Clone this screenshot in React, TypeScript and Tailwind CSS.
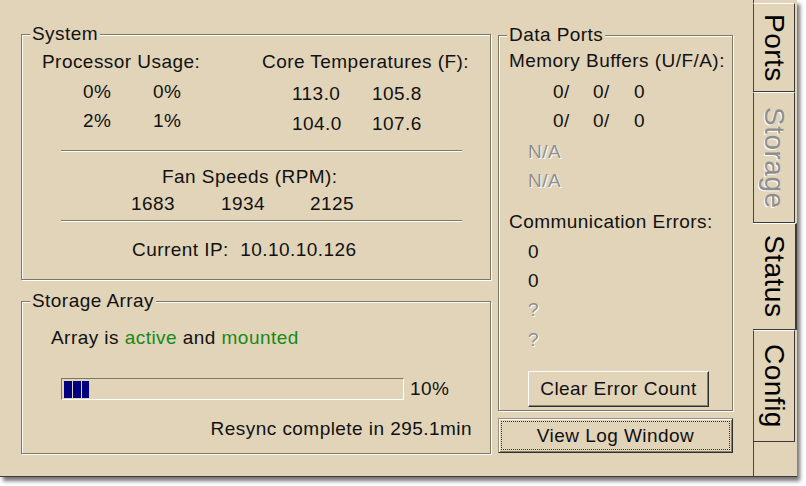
import type { ReactNode } from "react";

function Group({ title, className, children }: { title: string; className: string; children: ReactNode }) {
  return (
    <div className={`relative border border-[#7f7766] shadow-[inset_1px_1px_0_#ffffff,1px_1px_0_#ffffff] ${className}`}>
      <span className="absolute left-[8px] top-[-13px] bg-[#e1d4b9] px-[2px] leading-[24px]">{title}</span>
      {children}
    </div>
  );
}

function Separator({ className }: { className: string }) {
  return <div className={`h-[2px] border-t border-[#7f7766] border-b border-b-white ${className}`} />;
}

function Tab({ label, selected, muted, className }: { label: string; selected?: boolean; muted?: boolean; className: string }) {
  const frame = selected
    ? "w-[44px] border-t border-t-white border-r-2 border-r-[#3a3a3a] border-b border-b-[#3a3a3a]"
    : "w-[42px] border-l border-l-[#4a463e] border-t border-t-white border-r border-r-[#3a3a3a] border-b border-b-[#3a3a3a]";
  return (
    <div className={`flex items-center justify-center ${frame} ${className}`}>
      <span
        className={`[writing-mode:vertical-rl] text-[28px] leading-[30px] tracking-[0.5px] ${
          muted ? "text-[#8e8e8e] [text-shadow:1px_1px_0_#ffffff]" : "text-black"
        }`}
      >
        {label}
      </span>
    </div>
  );
}

export default function App() {
  return (
    <div className="h-[486px] w-[806px] bg-white font-['Liberation_Sans',Arial,sans-serif] text-[19px] leading-[24px] tracking-[0.45px] text-[#111]">
      <div className="flex h-[477px] w-[797px] border-b border-[#3a3a3a] bg-[#e1d4b9] shadow-[3px_4px_4px_rgba(0,0,0,0.55)]">
        {/* page */}
        <div className="flex w-[753px] gap-[7px] pl-[21px] pt-[34px]">
          <div className="flex w-[470px] flex-col gap-[21px]">
            <Group title="System" className="h-[246px]">
              <div className="mt-[15px] flex pl-[20px]">
                <span className="w-[220px]">Processor Usage:</span>
                <span>Core Temperatures (F):</span>
              </div>
              <div className="flex h-[68px] items-start">
                <div className="ml-[61px] mt-[6px] w-[209px]">
                  <div className="flex h-[29px]"><span className="w-[70px]">0%</span><span>0%</span></div>
                  <div className="flex h-[29px]"><span className="w-[70px]">2%</span><span>1%</span></div>
                </div>
                <div className="mt-[8px]">
                  <div className="flex h-[30px]"><span className="w-[80px]">113.0</span><span>105.8</span></div>
                  <div className="flex h-[30px]"><span className="w-[80px]">104.0</span><span>107.6</span></div>
                </div>
              </div>
              <Separator className="ml-[39px] mr-[28px] mt-[8px]" />
              <div className="mt-[13px] pl-[140px]">Fan Speeds (RPM):</div>
              <div className="mt-[3px] flex pl-[109px]">
                <span className="w-[90px]">1683</span>
                <span className="w-[89px]">1934</span>
                <span>2125</span>
              </div>
              <Separator className="ml-[39px] mr-[28px] mt-[4px]" />
              <div className="mt-[16px] pl-[110px]">Current IP:&nbsp; 10.10.10.126</div>
            </Group>

            <Group title="Storage Array" className="h-[153px]">
              <div className="mt-[24px] pl-[29px]">
                Array is <span className="text-[#168a16]">active</span> and <span className="text-[#168a16]">mounted</span>
              </div>
              <div className="mt-[27px] flex items-center pl-[39px]">
                <div className="flex h-[22px] w-[343px] gap-[1px] border border-t-[#7f7766] border-l-[#7f7766] border-b-white border-r-white pl-[2px] pt-[2px]">
                  <div className="h-[17px] w-[8px] bg-[#000080]" />
                  <div className="h-[17px] w-[8px] bg-[#000080]" />
                  <div className="h-[17px] w-[7px] bg-[#000080]" />
                </div>
                <span className="ml-[6px]">10%</span>
              </div>
              <div className="mt-[16px] pr-[18px] text-right">Resync complete in 295.1min</div>
            </Group>
          </div>

          <div className="flex w-[235px] flex-col gap-[7px]">
            <Group title="Data Ports" className="mt-[1px] h-[376px]">
              <div className="flex flex-col pl-[10px]">
                <div className="mt-[13px]">Memory Buffers (U/F/A):</div>
                <div className="mt-[7px] flex h-[29px] pl-[44px]"><span className="w-[40px]">0/</span><span className="w-[41px]">0/</span><span>0</span></div>
                <div className="flex h-[29px] pl-[44px]"><span className="w-[40px]">0/</span><span className="w-[41px]">0/</span><span>0</span></div>
                <div className="mt-[2px] h-[29px] pl-[19px] text-[#8e8e8e] [text-shadow:1px_1px_0_#ffffff]">N/A</div>
                <div className="h-[29px] pl-[19px] text-[#8e8e8e] [text-shadow:1px_1px_0_#ffffff]">N/A</div>
                <div className="mt-[12px] h-[30px]">Communication Errors:</div>
                <div className="h-[29px] pl-[19px]">0</div>
                <div className="h-[29px] pl-[19px]">0</div>
                <div className="h-[30px] pl-[19px] text-[#8e8e8e] [text-shadow:1px_1px_0_#ffffff]">?</div>
                <div className="h-[30px] pl-[19px] text-[#8e8e8e] [text-shadow:1px_1px_0_#ffffff]">?</div>
                <button className="ml-[19px] mt-[13px] h-[36px] w-[181px] border border-t-white border-l-white border-b-[#2e2e2e] border-r-[#2e2e2e] shadow-[inset_-1px_-1px_0_#8a826f] text-[19px] tracking-[0.45px]">
                  Clear Error Count
                </button>
              </div>
            </Group>
            <button className="h-[35px] w-[235px] border border-t-[#9a9284] border-l-[#9a9284] border-b-[#2e2e2e] border-r-[#2e2e2e] p-[2px] shadow-[inset_1px_1px_0_#ffffff,inset_-1px_-1px_0_#8a826f]">
              <div className="flex h-full w-full items-center justify-center border border-dotted border-[#333]">View Log Window</div>
            </button>
          </div>
        </div>

        {/* tabs */}
        <div className="flex w-[44px] flex-col">
          <div className="h-[3px] w-[42px] border-l border-l-[#4a463e]" />
          <Tab label="Ports" className="h-[89px]" />
          <Tab label="Storage" muted className="h-[131px]" />
          <Tab label="Status" selected className="h-[107px]" />
          <Tab label="Config" className="h-[112px]" />
          <div className="flex-1 border-l border-l-[#4a463e]" />
        </div>
      </div>
    </div>
  );
}
